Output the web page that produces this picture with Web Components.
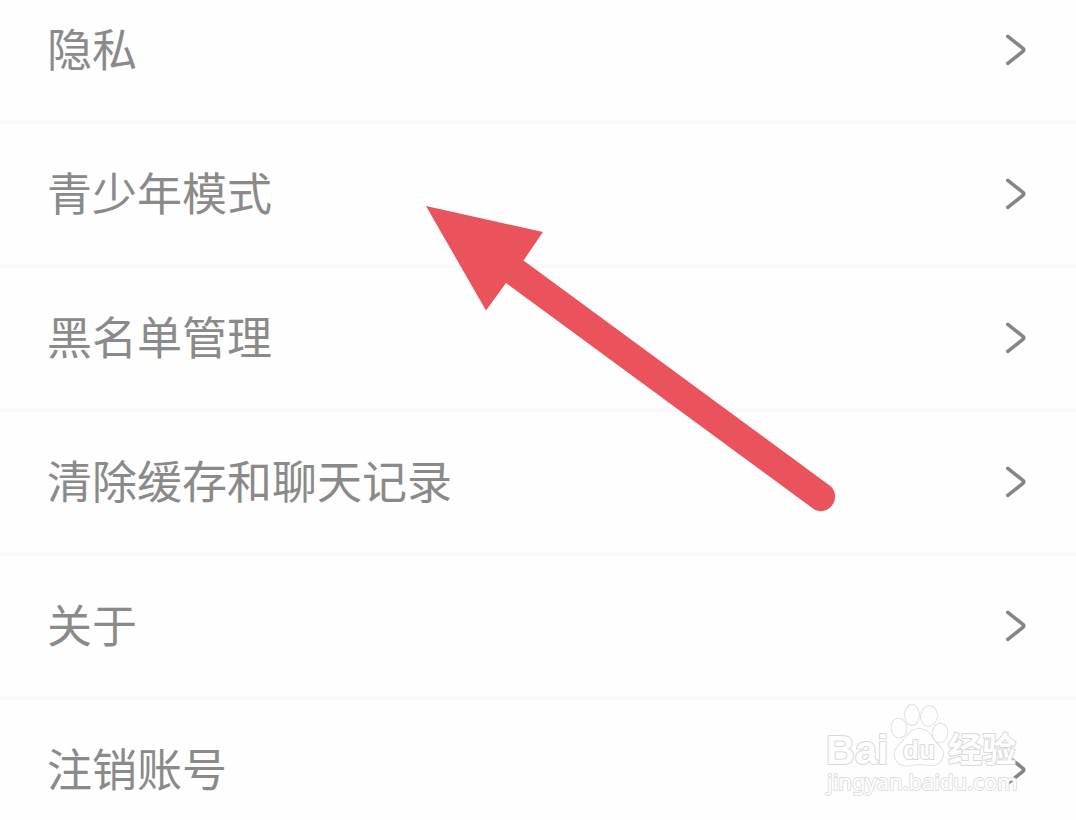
<!DOCTYPE html>
<html lang="zh-CN">
<head>
<meta charset="utf-8">
<meta name="viewport" content="width=device-width, initial-scale=1">
<title>设置</title>
<style>
  body { margin: 0; background: #fefefe; font-family: "Noto Sans CJK SC", sans-serif; color: #8a8a8a; }
</style>
</head>
<body>
<settings-page>
  <settings-row href="#privacy">隐私</settings-row>
  <settings-row href="#teen">青少年模式</settings-row>
  <settings-row href="#blocklist">黑名单管理</settings-row>
  <settings-row href="#clear">清除缓存和聊天记录</settings-row>
  <settings-row href="#about">关于</settings-row>
  <settings-row href="#delete">注销账号</settings-row>
  <pointer-arrow slot="overlay"></pointer-arrow>
  <site-watermark slot="overlay"></site-watermark>
</settings-page>

<template id="page-template">
  <style>
    :host { display: block; position: relative; height: 100vh; overflow: hidden; }
    nav { display: flex; flex-direction: column; margin-top: -20px; }
  </style>
  <nav aria-label="设置"><slot></slot></nav>
  <slot name="overlay"></slot>
</template>

<template id="row-template">
  <style>
    :host { display: block; flex: none; border-bottom: 4px solid #fafafa; }
    a { display: flex; align-items: center; justify-content: space-between; height: 140px;
        padding: 0 48px 0 47px; color: inherit; text-decoration: none; font-size: 45px; line-height: 64px; }
    span { padding-bottom: 4px; }
    svg { display: block; flex: none; }
  </style>
  <a>
    <span><slot></slot></span>
    <svg width="24" height="32" viewBox="0 0 24 32" fill="none" stroke="#858585" stroke-width="3.6" stroke-linecap="round" stroke-linejoin="round" aria-hidden="true">
      <path d="M3.800 2.400 18.900 14.300Q20.700 15.800 18.900 17.300L3.800 29.400"/>
    </svg>
  </a>
</template>

<template id="arrow-template">
  <style>
    :host { display: block; position: absolute; left: 426px; top: 206px; pointer-events: none; }
    svg { display: block; }
  </style>
  <svg width="412" height="308" viewBox="0 0 412 308" aria-hidden="true">
    <path fill="#ea525c" d="M0 0 117 26 97.500 54.500 405 280.500A14.500 14.500 0 0 1 389 304L80 77 60 104.500Z"/>
  </svg>
</template>

<template id="watermark-template">
  <style>
    :host { display: block; position: absolute; right: 52px; top: 700px; pointer-events: none; }
    svg { display: block; }
    text, .paw { fill: #fefefe; stroke: #d8d8d8; stroke-width: 2px; stroke-linejoin: round; paint-order: stroke; }
    .paw { stroke-width: 1.5px; }
    .latin { font: bold 40px "Liberation Sans", sans-serif; }
    .du { font: bold 26px "Liberation Sans", sans-serif; }
    .cjk { font: bold 34px "Noto Sans CJK SC", sans-serif; }
    .url { font: 22px "Noto Sans", sans-serif; stroke: #dedede; }
  </style>
  <svg width="200" height="104" viewBox="0 0 200 104">
    <text class="latin" x="2" y="64">Bai</text>
    <g class="paw">
      <ellipse cx="75" cy="28" rx="7.500" ry="9.500" transform="rotate(-8 75 28)"/>
      <ellipse cx="88" cy="15" rx="7" ry="10"/>
      <ellipse cx="105" cy="16" rx="8" ry="10" transform="rotate(8 105 16)"/>
      <ellipse cx="116" cy="33" rx="7.500" ry="9.500" transform="rotate(10 116 33)"/>
      <path d="M95 29C86 29 83 36 79 41C74 47 69 49 71 57C73 65 81 67 88 65C93 64 99 64 104 65C112 67 118 62 119 55C120 48 114 46 110 40C106 34 104 29 95 29Z"/>
    </g>
    <text class="du" x="79" y="59">du</text>
    <text class="cjk" x="124" y="62">经验</text>
    <text class="url" x="3" y="90">jingyan.baidu.com</text>
  </svg>
</template>

<script>
  class TemplateElement extends HTMLElement {
    constructor() {
      super();
      const template = document.getElementById(this.constructor.templateId);
      this.attachShadow({ mode: "open" }).append(template.content.cloneNode(true));
    }
  }
  customElements.define("settings-page", class extends TemplateElement {
    static templateId = "page-template";
  });
  customElements.define("settings-row", class extends TemplateElement {
    static templateId = "row-template";
    connectedCallback() {
      this.shadowRoot.querySelector("a").href = this.getAttribute("href");
    }
  });
  customElements.define("pointer-arrow", class extends TemplateElement {
    static templateId = "arrow-template";
  });
  customElements.define("site-watermark", class extends TemplateElement {
    static templateId = "watermark-template";
  });
</script>
</body>
</html>
